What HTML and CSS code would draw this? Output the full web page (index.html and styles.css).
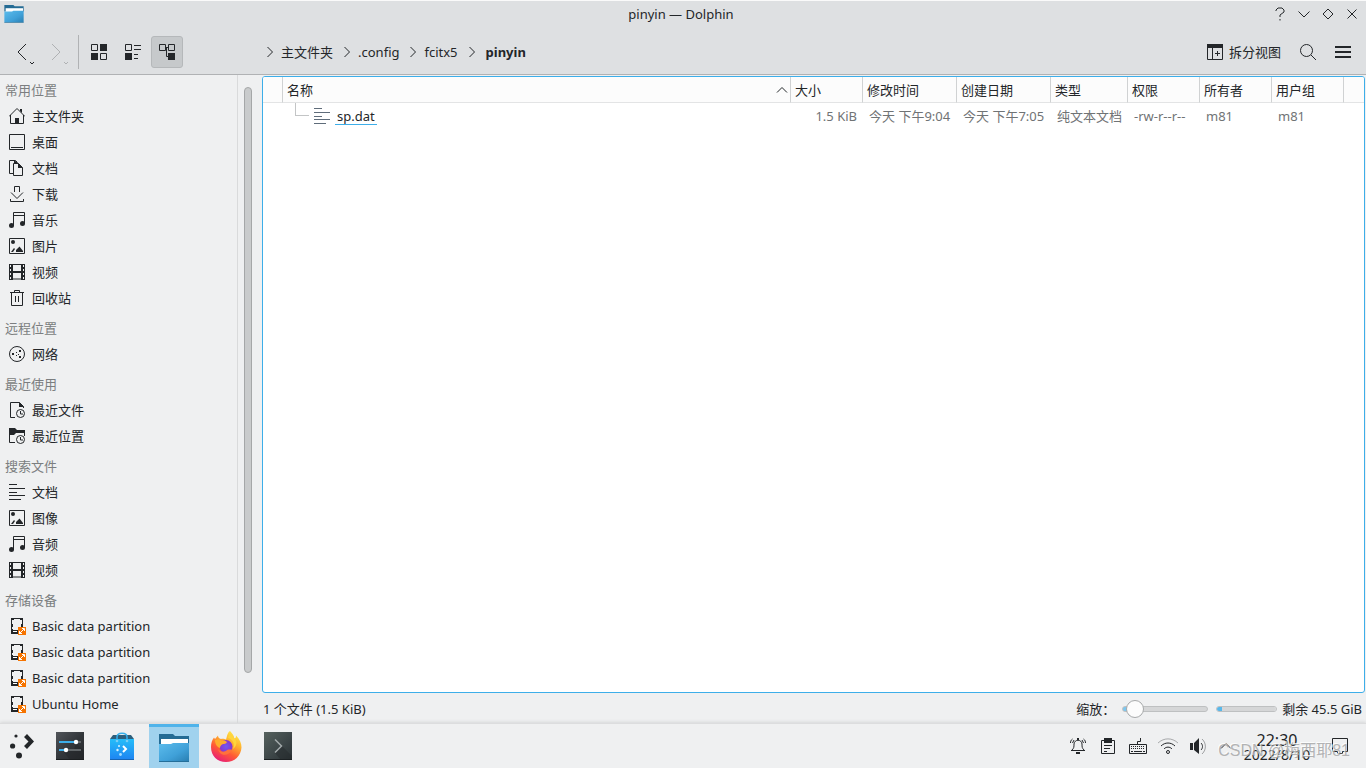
FILE: index.html
```html
<!DOCTYPE html>
<html lang="zh-CN">
<head>
<meta charset="utf-8">
<title>pinyin — Dolphin</title>
<link rel="stylesheet" href="styles.css">
</head>
<body>
<svg class="defs" width="0" height="0" aria-hidden="true">
  <defs>
    <linearGradient id="blue" x1="0" y1="0" x2="1" y2="1"><stop offset="0" stop-color="#5cbcec"/><stop offset=".6" stop-color="#3fa0d8"/><stop offset="1" stop-color="#2a7fb2"/></linearGradient>
    <linearGradient id="bag" x1="0" y1="0" x2="0" y2="1"><stop offset="0" stop-color="#25bdf9"/><stop offset="1" stop-color="#1e86f2"/></linearGradient>
    <linearGradient id="dark" x1="0" y1="0" x2="1" y2="1"><stop offset="0" stop-color="#51555a"/><stop offset=".5" stop-color="#33373b"/><stop offset="1" stop-color="#26292c"/></linearGradient>
    <linearGradient id="term" x1="0" y1="0" x2="1" y2="1"><stop offset="0" stop-color="#56625f"/><stop offset=".6" stop-color="#3b4446"/><stop offset="1" stop-color="#2b3235"/></linearGradient>
    <linearGradient id="fire" x1=".8" y1="0" x2=".25" y2="1"><stop offset="0" stop-color="#fff04a"/><stop offset=".35" stop-color="#ffb02e"/><stop offset=".65" stop-color="#ff5a35"/><stop offset="1" stop-color="#e61a7c"/></linearGradient>
    <radialGradient id="globe"><stop offset="0" stop-color="#7059f2"/><stop offset="1" stop-color="#8a35c9"/></radialGradient>
  </defs>
  <symbol id="home" viewBox="0 0 16 16"><path d="M1.5 7v8.500h13V7M0 8.500l8-8 8 8" class="s"/><path d="M11 1h2v4l-2-2zM6 10h4v6H6z"/></symbol>
  <symbol id="desktop" viewBox="0 0 16 16"><path d="M.5.5h15v15H.5zM2 13.500h12" class="s"/></symbol>
  <symbol id="docs" viewBox="0 0 16 16"><path d="M4.500 13.500h-4V.5h6l2 2M4.500 3.500h5l4 4v8h-9z" class="s"/><path d="M5 0l4 3v1H5zM9 3l5 5H9z"/></symbol>
  <symbol id="download" viewBox="0 0 16 16"><path d="M5.500 6V.5h5V6M2 6.500l6 6 6-6M1.500 13v2.500h13V13" class="s"/></symbol>
  <symbol id="music" viewBox="0 0 16 16"><path d="M4.500 14V.5h11V12M5 3.500h10" class="s"/><circle cx="2.500" cy="13.500" r="2.500"/><circle cx="13.500" cy="11.500" r="2.500"/></symbol>
  <symbol id="image" viewBox="0 0 16 16"><path d="M.5.5h15v15H.5z" class="s"/><circle cx="4" cy="4" r="2"/><path d="M2 14l3-4 1 1-2 3zM7 14v-2l3.500-3.500L14 13v1z"/></symbol>
  <symbol id="video" viewBox="0 0 16 16"><path d="M0 0h4v16H0zM12 0h4v16h-4zM4 7h8v2H4z"/><path d="M4 .5h8M4 15h8" class="s"/><path d="M1 1h1v2H1zM1 5h1v2H1zM1 9h1v2H1zM1 13h1v2H1zM14 1h1v2h-1zM14 5h1v2h-1zM14 9h1v2h-1zM14 13h1v2h-1z" fill="#eff0f1"/></symbol>
  <symbol id="trash" viewBox="0 0 16 16"><path d="M1 2.500h14M5.500 2V.5h5V2M2.500 3v12.500h11V3M6.500 6v6M9.500 6v6" class="s"/></symbol>
  <symbol id="network" viewBox="0 0 16 16"><circle cx="8" cy="8" r="7.500" class="s"/><path d="M3 7h2v2H3zM7 6h1v1H7zM10 4h2v2h-2zM7 9h1v1H7zM10 10h2v2h-2zM9 8h1v1H9z"/></symbol>
  <symbol id="clock" viewBox="0 0 16 16"><circle cx="11.500" cy="11.500" r="4" class="s"/><path d="M11.500 9v3H14" class="s"/></symbol>
  <symbol id="recentfile" viewBox="0 0 16 16"><path d="M6 15.500H1.500V.5h9l4 4V6" class="s"/><path d="M10 0l5 5h-5z"/><use href="#clock"/></symbol>
  <symbol id="recentdir" viewBox="0 0 16 16"><path d="M0 0h6l2 2h8v3H7L5 7H0z"/><path d="M6 14.500H.5V1M15.500 4v4" class="s"/><use href="#clock"/></symbol>
  <symbol id="lines" viewBox="0 0 16 16"><path d="M0 .5h8M0 4.500h16M0 8.500h8M0 11.500h16M0 15.500h12" class="s"/></symbol>
  <symbol id="disk" viewBox="0 0 17 18"><path d="M2.500 1.500h11v15h-11z" class="s"/><path d="M2 1h3v2H3v2H2zM11 1h3v4h-1V3h-2zM2 7h2v3H2zM12 7h2v3h-2zM2 12h2v1h5v4H2z"/><path d="M4 14h4v1H4z" fill="#fff"/><path d="M9 10h8v8H9z" fill="#f67400"/><path d="M10 17l3-3M13 11.500h2.500V14M13 14l2-2M10.500 14v2.500H13" stroke="#fff" fill="none"/></symbol>
  <symbol id="folder" viewBox="0 0 30 28"><path d="M0 0h14l2 2h14v8H0z" fill="#246b94"/><path d="M2 5h27v8H2z" fill="#fff"/><path d="M0 10h12l2-1h16v18H0z" fill="url(#blue)"/><path d="M0 27h30v1H0z" fill="#246f9a"/></symbol>
</svg>

<div class="window">
  <header class="top">
    <div class="titlebar">
      <svg class="appicon" width="20" height="18"><use href="#folder"/></svg>
      <h1>pinyin — Dolphin</h1>
      <div class="winbtns">
        <button aria-label="帮助"><svg width="12" height="14" viewBox="0 0 12 14"><path d="M2 4V3l2-2h4l2 2v2L6 8v2M6 12v1.500" class="s"/></svg></button>
        <button aria-label="最小化"><svg width="12" height="14" viewBox="0 0 12 14"><path d="M.5 4.500L6 10l5.500-5.500" class="s"/></svg></button>
        <button aria-label="最大化"><svg width="12" height="14" viewBox="0 0 12 14"><path d="M1 7l5-5 5 5-5 5z" class="s"/></svg></button>
        <button aria-label="关闭"><svg width="12" height="14" viewBox="0 0 12 14"><path d="M1.500 2.500l9 9M10.500 2.500l-9 9" class="s"/></svg></button>
      </div>
    </div>
    <div class="toolbar">
      <div class="tools">
        <button class="nav" aria-label="后退"><svg width="22" height="24" viewBox="0 0 22 24"><path d="M11 4l-8 8 8 8M15 22l2 2 2-2" class="s"/></svg></button>
        <button class="nav off" aria-label="前进" disabled><svg width="22" height="24" viewBox="0 0 22 24"><path d="M3 4l8 8-8 8M15 22l2 2 2-2" class="s"/></svg></button>
        <span class="sep"></span>
        <button class="tool" aria-label="图标"><svg width="16" height="16" viewBox="0 0 16 16"><path d="M.5.5h6v6h-6zM9.500 9.500h6v6h-6z" class="s"/><path d="M9 0h7v7H9zM0 9h7v7H0z"/></svg></button>
        <button class="tool" aria-label="紧凑"><svg width="16" height="16" viewBox="0 0 16 16"><path d="M.5.5h6v6h-6zM9 1.500h7M9 5.500h7M9 10.500h4M9 14.500h4" class="s"/><path d="M0 9h7v7H0z"/></svg></button>
        <button class="tool on" aria-label="详细信息" aria-pressed="true"><svg width="16" height="16" viewBox="0 0 16 16"><path d="M.5.5h6v6h-6zM9.500.5h6v6h-6zM6 3.500h4M7.500 4v8.500H10" class="s"/><path d="M9 9h7v7H9z"/></svg></button>
      </div>
      <nav class="crumbs" aria-label="路径">
        <svg width="8" height="12" viewBox="0 0 8 12"><path d="M1.500 1l5 5-5 5" class="s"/></svg><a href="#">主文件夹</a>
        <svg width="8" height="12" viewBox="0 0 8 12"><path d="M1.500 1l5 5-5 5" class="s"/></svg><a href="#">.config</a>
        <svg width="8" height="12" viewBox="0 0 8 12"><path d="M1.500 1l5 5-5 5" class="s"/></svg><a href="#">fcitx5</a>
        <svg width="8" height="12" viewBox="0 0 8 12"><path d="M1.500 1l5 5-5 5" class="s"/></svg><a href="#" class="here" aria-current="page">pinyin</a>
      </nav>
      <div class="actions">
        <button class="split"><svg width="16" height="16" viewBox="0 0 16 16"><path d="M.5.5h15v15H.5zM5.500 4v12M8 9.500h5M10.500 7v5" class="s"/><path d="M0 0h16v4H0z"/></svg>拆分视图</button>
        <button aria-label="搜索"><svg width="16" height="16" viewBox="0 0 16 16"><circle cx="6.500" cy="6.500" r="6" class="s"/><path d="M11 11l5 5" class="s"/></svg></button>
        <button aria-label="菜单"><svg width="16" height="12" viewBox="0 0 16 12"><path d="M0 0h16v2H0zM0 5h16v2H0zM0 10h16v2H0z"/></svg></button>
      </div>
    </div>
  </header>

  <div class="body">
    <aside class="side">
      <div class="places">
        <h2>常用位置</h2>
        <ul>
          <li><a href="#"><svg><use href="#home"/></svg>主文件夹</a></li>
          <li><a href="#"><svg><use href="#desktop"/></svg>桌面</a></li>
          <li><a href="#"><svg><use href="#docs"/></svg>文档</a></li>
          <li><a href="#"><svg><use href="#download"/></svg>下载</a></li>
          <li><a href="#"><svg><use href="#music"/></svg>音乐</a></li>
          <li><a href="#"><svg><use href="#image"/></svg>图片</a></li>
          <li><a href="#"><svg><use href="#video"/></svg>视频</a></li>
          <li><a href="#"><svg><use href="#trash"/></svg>回收站</a></li>
        </ul>
        <h2>远程位置</h2>
        <ul>
          <li><a href="#"><svg><use href="#network"/></svg>网络</a></li>
        </ul>
        <h2>最近使用</h2>
        <ul>
          <li><a href="#"><svg><use href="#recentfile"/></svg>最近文件</a></li>
          <li><a href="#"><svg><use href="#recentdir"/></svg>最近位置</a></li>
        </ul>
        <h2>搜索文件</h2>
        <ul>
          <li><a href="#"><svg><use href="#lines"/></svg>文档</a></li>
          <li><a href="#"><svg><use href="#image"/></svg>图像</a></li>
          <li><a href="#"><svg><use href="#music"/></svg>音频</a></li>
          <li><a href="#"><svg><use href="#video"/></svg>视频</a></li>
        </ul>
        <h2>存储设备</h2>
        <ul class="disks">
          <li><a href="#"><svg><use href="#disk"/></svg>Basic data partition</a></li>
          <li><a href="#"><svg><use href="#disk"/></svg>Basic data partition</a></li>
          <li><a href="#"><svg><use href="#disk"/></svg>Basic data partition</a></li>
          <li><a href="#"><svg><use href="#disk"/></svg>Ubuntu Home</a></li>
        </ul>
      </div>
      <div class="scroll"><div class="thumb"></div></div>
    </aside>

    <main class="content">
      <div class="view">
        <table>
          <colgroup><col class="w20"><col><col class="w72"><col class="w94"><col class="w94"><col class="w77"><col class="w72"><col class="w72"><col class="w72"><col class="w20"></colgroup>
          <thead>
            <tr><th></th><th><span class="sorted">名称<svg width="12" height="8" viewBox="0 0 12 8"><path d="M1 6.500l5-5 5 5" class="s"/></svg></span></th><th>大小</th><th>修改时间</th><th>创建日期</th><th>类型</th><th>权限</th><th>所有者</th><th>用户组</th><th></th></tr>
          </thead>
          <tbody>
            <tr><td></td><td class="name"><span class="entry"><span class="branch"></span><svg class="file" width="16" height="16"><use href="#lines"/></svg><a href="#">sp.dat</a></span></td><td class="num">1.5 KiB</td><td>今天 下午9:04</td><td>今天 下午7:05</td><td>纯文本文档</td><td>-rw-r--r--</td><td>m81</td><td>m81</td><td></td></tr>
          </tbody>
        </table>
      </div>
      <footer class="status">
        <span>1 个文件 (1.5 KiB)</span>
        <div class="zoom">
          <label for="zoom">缩放：</label>
          <input id="zoom" type="range" min="0" max="100" value="4">
          <progress aria-label="已用空间" max="100" value="9"></progress>
          <span>剩余 45.5 GiB</span>
        </div>
      </footer>
    </main>
  </div>
</div>

<div class="panel">
  <div class="launchers">
    <button class="kick" aria-label="应用程序"><svg width="24" height="26" viewBox="0 0 24 26"><circle cx="6" cy="3" r="1.600"/><circle cx="2.600" cy="13" r="2.600"/><circle cx="9" cy="22.500" r="3"/><path d="M14 4l3-3 7 7.500-7 7.500-3-3 4.500-4.500z"/></svg></button>
    <button aria-label="系统设置"><svg width="28" height="28" viewBox="0 0 28 28"><path d="M0 0h28v28H0z" fill="url(#dark)"/><path d="M18 18l2-7 8 8v9H14l-6-8z" fill="#202326" opacity=".4"/><path d="M3 10h16M3 18h7" stroke="#3daee9" stroke-width="2"/><path d="M20 10h5M10 18h15" stroke="#616669" stroke-width="2"/><circle cx="20" cy="10" r="2.200" fill="#fff"/><circle cx="10" cy="18" r="2.200" fill="#fff"/><path d="M0 27h28v1H0z" fill="#1b1e20"/></svg></button>
    <button aria-label="软件中心"><svg width="24" height="28" viewBox="0 0 24 28"><path d="M3 3h18l3 4H0z" fill="#2d5f7c"/><path d="M0 7h24v20H0z" fill="url(#bag)"/><path d="M0 27h24v1H0z" fill="#1765b5"/><path d="M7 9V5c0-5 10-5 10 0v4" fill="none" stroke="#35aeea" stroke-width="1.500"/><circle cx="7" cy="9" r="1.300" fill="#79cdf5"/><circle cx="17" cy="9" r="1.300" fill="#79cdf5"/><path d="M13 14l3 3-3 3" fill="none" stroke="#fff" stroke-width="2"/><circle cx="9" cy="14" r="1" fill="#d9f2ff"/><circle cx="7.500" cy="18" r="1.200" fill="#d9f2ff"/><circle cx="10.500" cy="22.500" r="1.400" fill="#a6dcff"/></svg></button>
    <button class="active" aria-label="Dolphin"><svg width="30" height="28"><use href="#folder"/></svg></button>
    <button aria-label="Firefox"><svg width="32" height="32" viewBox="0 0 32 32"><path d="M20 1c4 4 4 6 4.500 7.500C26 8 26 6.500 26 5.500c4 4 5.500 8 5.500 12C31 26 24.500 32 16 32S1 26 1 17c0-4 1-7 3-9.500L5 9l3-3.500c0 2 1 3 3 3.500 2-.5 4 0 5 .5C17 7 17 3 20 1z" fill="url(#fire)"/><circle cx="16" cy="16.500" r="6.500" fill="url(#globe)"/><path d="M5 10c4-2 6 0 7 1 2-1 3.500 0 5 1-1 2-3 2-4 2-2 1-3 2-3 4-3-1-5-4-5-8z" fill="#ffad2d"/><path d="M8 19c3 4 7 3 9 1 3-1 5 0 5 0-3 6-12 7-14-1z" fill="#ff713c"/><path d="M18 8c5 1 7 6 5 11 5-4 4-9 1-11l-4-5z" fill="#ffd53c"/></svg></button>
    <button aria-label="Konsole"><svg width="28" height="28" viewBox="0 0 28 28"><path d="M0 0h28v28H0z" fill="url(#term)"/><path d="M11 21l7-7 10 10v4H17z" fill="#23292b" opacity=".45"/><path d="M11 7.500l6.500 6.500-6.500 6.500" fill="none" stroke="#a2a9aa" stroke-width="1.500"/><path d="M0 27h28v1H0z" fill="#1b2022"/></svg></button>
  </div>
  <div class="tray">
    <button aria-label="通知"><svg width="18" height="18" viewBox="0 0 18 18"><path d="M2 13.500h14M3 13c2-2 2-3 2-6 .5-5 7.500-5 8 0 0 3 0 4 2 6M3.500 2C2 3 1.500 4.500 1.500 6M14.500 2c1.500 1 2 2.500 2 4M5 3L3.500 6M13 3l1.500 3" class="s"/><path d="M7 15h4v2H7zM8 1h2v2H8z"/></svg></button>
    <button aria-label="剪贴板"><svg width="14" height="16" viewBox="0 0 14 16"><path d="M.5 2.500h13v13H.5zM3 7.500h8M3 10.500h6M3 13.500h3" class="s"/><path d="M3 0h8v5H3z"/></svg></button>
    <button aria-label="键盘"><svg width="18" height="18" viewBox="0 0 18 18"><path d="M.5 7.500h17v9H.5zM8.500 7V4.500h3V1" class="s"/><path d="M2 9.500h14M2 11.500h14" class="s" stroke-dasharray="1 1"/><path d="M2 14.500h2M5 14.500h8M14 14.500h2" class="s"/></svg></button>
    <button aria-label="无线网络"><svg width="22" height="18" viewBox="0 0 22 18"><path d="M1 6c6-5.500 14-5.500 20 0" class="s" opacity=".35"/><path d="M4 9c4-4 10-4 14 0M7 12c2-2.500 6-2.500 8 0" class="s"/><circle cx="11" cy="15" r="1.500" class="s"/></svg></button>
    <button aria-label="音量"><svg width="16" height="18" viewBox="0 0 16 18"><path d="M0 6h3v7H0zM4 6l5-5v16l-5-4z"/><path d="M11 6c2 2 2 5 0 7" class="s"/><path d="M12 2c4.500 4 4.500 11 0 15" class="s" opacity=".4"/></svg></button>
    <button class="more" aria-label="显示隐藏图标"><svg width="12" height="8" viewBox="0 0 12 8"><path d="M1 6.500l5-5 5 5" class="s"/></svg></button>
    <div class="clock"><time class="time">22:30</time><time class="date">2022/8/10</time></div>
    <button class="show" aria-label="显示桌面"><svg width="16" height="16" viewBox="0 0 16 16"><path d="M.5.5h15v13h-5v2h-5v-2h-5z" class="s"/></svg></button>
  </div>
  <span class="mark">CSDN @梅西耶81</span>
</div>
</body>
</html>
```
FILE: styles.css
```css
* { box-sizing: border-box; }
body {
  margin: 0;
  height: 100vh;
  display: flex;
  flex-direction: column;
  overflow: hidden;
  background: #eff0f1;
  color: #232629;
  font: 13px/20px "Noto Sans", "Noto Sans CJK SC", sans-serif;
}
h1, h2, ul { margin: 0; padding: 0; font-size: 13px; font-weight: 400; }
ul { list-style: none; }
a { color: inherit; text-decoration: none; }
button {
  display: flex;
  align-items: center;
  justify-content: center;
  padding: 0;
  border: 0;
  background: none;
  color: inherit;
  font: inherit;
}
svg { display: block; flex: none; fill: currentColor; }
.defs { position: absolute; }
.s { fill: none; stroke: currentColor; stroke-width: 1; }

.window { flex: 1; min-height: 0; display: flex; flex-direction: column; }
.top { border-top: 1px solid #fafafa; border-bottom: 1px solid #b0b2b4; background: #dee0e2; }
.titlebar { display: grid; grid-template-columns: 1fr auto 1fr; align-items: center; height: 26px; padding: 0 8px 0 4px; }
.winbtns { display: flex; justify-content: flex-end; gap: 12px; }
.toolbar { display: flex; align-items: center; height: 47px; padding: 3px 15px 0 0; }
.tools { display: flex; align-items: center; width: 266px; padding-left: 15px; }
.nav { width: 34px; height: 32px; justify-content: flex-start; }
.nav svg { overflow: visible; }
.off { color: #afb1b3; }
.sep { width: 1px; height: 34px; margin: 0 4px 0 -5px; background: #b0b2b4; }
.tool { width: 32px; height: 32px; margin-right: 2px; }
.on { border: 1px solid #b5b8ba; border-radius: 3px; background: #c6c9cb; }
.crumbs { flex: 1; display: flex; align-items: center; }
.crumbs a { margin: 0 10px 0 7px; }
.crumbs .here { margin-left: 10px; font-weight: 700; }
.actions { display: flex; align-items: center; gap: 19px; }
.split { gap: 6px; }

.body { flex: 1; min-height: 0; display: flex; }
.side { width: 262px; display: flex; }
.places { width: 238px; padding-top: 2px; overflow: hidden; border-right: 1px solid #d9dadb; }
.places h2 { margin-top: 4px; padding-left: 5px; line-height: 26px; color: #7b7e80; }
.places h2:first-child { margin-top: 0; }
.places li a { display: flex; align-items: center; gap: 7px; height: 26px; padding-left: 9px; }
.places svg { width: 16px; height: 16px; }
.places .disks svg { width: 17px; height: 18px; }
.places .disks a { gap: 6px; }
.scroll { flex: 1; padding: 12px 10px 50px 6px; }
.thumb { height: 100%; border: 1px solid #a5a7a8; border-radius: 4px; background: #c9cbcc; }

.content { flex: 1; min-width: 0; display: flex; flex-direction: column; padding: 2px 1px 0 0; }
.view { flex: 1; border: 1px solid #3daee9; border-radius: 3px; background: #fff; overflow: hidden; }
table { width: 100%; table-layout: fixed; border-collapse: separate; border-spacing: 0; }
.w20 { width: 20px; }
.w72 { width: 72px; }
.w77 { width: 77px; }
.w94 { width: 94px; }
th, td { height: 26px; padding: 0 4px; text-align: left; font-weight: 400; white-space: nowrap; }
th { border-right: 1px solid #d0d2d3; border-bottom: 1px solid #e3e4e5; background: #fcfcfc; }
th:last-child { border-right: 0; }
td { padding: 0 6px; color: #707375; }
.num { text-align: right; }
.sorted { display: flex; align-items: center; justify-content: space-between; margin-right: -2px; }
.name { padding: 0 12px; color: #232629; }
.entry { display: flex; align-items: center; height: 26px; }
.branch { align-self: flex-start; width: 14px; height: 13px; border: solid #c3c5c6; border-width: 0 0 1px 1px; }
.file { margin: 0 5px; color: #5f6c7a; }
.entry a { padding: 0 2px; line-height: 16px; border-bottom: 1px solid #3daee9; }
.content { padding-top: 1px; }

.status { display: flex; align-items: center; justify-content: space-between; height: 30px; padding: 1px 3px 0 1px; }
.zoom { display: flex; align-items: center; }
.zoom label { margin-right: 7px; }
#zoom { appearance: none; width: 86px; height: 18px; margin: 0 8px 0 0; background: none; }
#zoom::-webkit-slider-runnable-track { height: 6px; border: 1px solid #bec0c1; border-radius: 3px; background: linear-gradient(90deg, #7cc7ef 8px, #d5d6d7 8px); }
#zoom::-webkit-slider-thumb { appearance: none; width: 18px; height: 18px; margin-top: -7px; border: 1px solid #a7a9aa; border-radius: 50%; background: #fcfcfc; }
progress { appearance: none; width: 61px; height: 6px; margin-right: 5px; border: 1px solid #bec0c1; border-radius: 3px; overflow: hidden; }
progress::-webkit-progress-bar { background: #d5d6d7; }
progress::-webkit-progress-value { background: #58b8ea; }

.panel { position: relative; display: flex; justify-content: space-between; height: 45px; border-top: 1px solid #dcddde; background: #eff0f1; box-shadow: 0 -1px 3px #d6d7d8; }
.launchers { display: flex; gap: 2px; }
.launchers button { width: 50px; }
.launchers .kick { width: 43px; }
.launchers .active { border-top: 3px solid #4fb3ea; background: #a0d2ee; }
.tray { display: flex; align-items: center; padding-right: 18px; }
.tray button { width: 30px; height: 44px; }
.tray .more { width: 26px; }
.clock { display: flex; flex-direction: column; align-items: center; width: 76px; }
.time { font-size: 16px; line-height: 16px; }
.date { font-size: 14px; line-height: 13px; }
.tray .show { width: 33px; justify-content: flex-end; }
.mark {
  position: absolute;
  right: 16px;
  bottom: 7px;
  font: 16px/20px "Liberation Sans", "Noto Sans CJK SC", sans-serif;
  color: #a3a4a5;
  opacity: 0.8;
  text-shadow: -1px -1px 0 #fff;
}
```
